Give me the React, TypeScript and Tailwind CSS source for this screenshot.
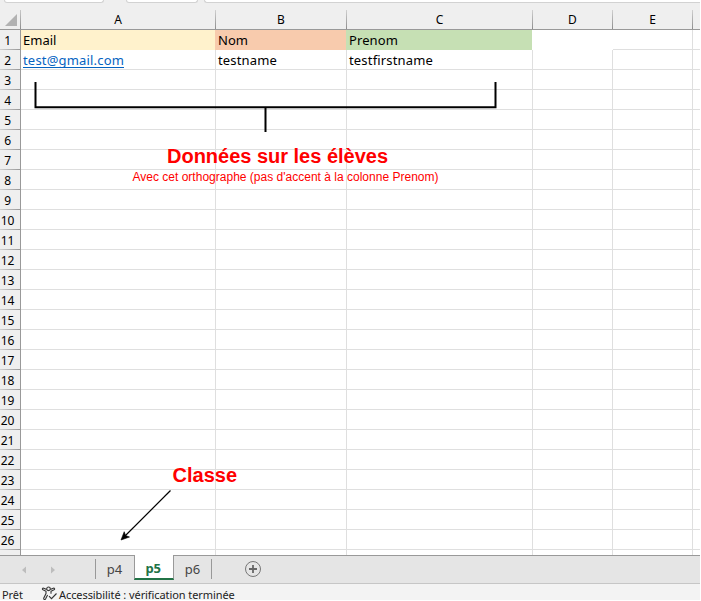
import React from "react";

const rows = Array.from({ length: 26 }, (_, i) => i + 1);

const columns = [
  { name: "A", width: "w-[195px]" },
  { name: "B", width: "w-[131px]" },
  { name: "C", width: "w-[186px]" },
  { name: "D", width: "w-[80px]" },
  { name: "E", width: "w-[80px]" },
];

const headings = [
  { text: "Email", style: "w-[194px] pl-[2px] bg-[#fff2cc]" },
  { text: "Nom", style: "w-[131px] pl-[3px] bg-[#f8cbad]" },
  { text: "Prenom", style: "w-[186px] pl-[3px] bg-[#c6e0b4] tracking-[0.1px]" },
];

function FormulaBar() {
  return (
    <div className="flex h-[10px] shrink-0 items-start bg-[#efefef] pl-1">
      <div className="h-[3px] w-[100px] rounded-b-[4px] border border-t-0 border-[#d2d2d2] bg-white" />
      <div className="ml-[22px] h-[3px] w-[72px] rounded-b-[4px] border border-t-0 border-[#d2d2d2] bg-white" />
      <div className="ml-[6px] h-[3px] flex-1 rounded-bl-[4px] border-b border-l border-[#d2d2d2] bg-white" />
    </div>
  );
}

function ColumnHeaders() {
  return (
    <div className="flex h-5 shrink-0 border-b border-[#999] bg-[#efefef] text-[12px] leading-[19px]">
      <div className="flex w-[21px] shrink-0 items-end justify-end pr-1 pb-[3px]">
        <svg width="12" height="12" viewBox="0 0 12 12"><path d="M12 0V12H0Z" fill="#b2b2b2" /></svg>
      </div>
      <div className="-ml-px h-[19px] w-px bg-linear-to-b from-[#c8c8c8] to-[#8e8e8e]" />
      {columns.map((c) => (
        <div key={c.name} className={`flex shrink-0 ${c.width}`}>
          <span className="flex-1 text-center">{c.name}</span>
          <span className="h-[19px] w-px bg-linear-to-b from-[#d0d0d0] to-[#8e8e8e]" />
        </div>
      ))}
    </div>
  );
}

function RowHeader({ n }: { n: number }) {
  return (
    <div className="flex h-5 w-[21px] shrink-0 flex-col border-r border-[#999] bg-[#efefef]">
      <span className="flex h-[19px] w-[15px] justify-center text-[12px] leading-[21px] tracking-[-0.2px]">{n}</span>
      <span className="h-px bg-linear-to-r from-[#d0d0d0] to-[#999]" />
    </div>
  );
}

function Row({ n }: { n: number }) {
  if (n === 1) {
    return (
      <div className="flex h-5 shrink-0">
        <RowHeader n={1} />
        {headings.map((h) => (
          <div key={h.text} className={`shrink-0 leading-[20px] ${h.style}`}>{h.text}</div>
        ))}
        <div className="w-[81px] shrink-0" />
        <div className="w-[80px] shrink-0 border-r border-b border-[#dfdfdf]" />
        <div className="flex-1 border-b border-[#dfdfdf]" />
      </div>
    );
  }
  return (
    <div className="flex h-5 shrink-0">
      <RowHeader n={n} />
      {columns.map((c, i) => (
        <div key={c.name} className={`shrink-0 border-r border-b border-[#dfdfdf] pl-[2px] leading-[20px] ${c.width}`}>
          {n === 2 && i === 0 && <span className="inline-block h-[18px] border-b border-[#0563c1] tracking-[0.18px] text-[#0563c1]">test@gmail.com</span>}
          {n === 2 && i === 1 && <span className="tracking-[0.15px]">testname</span>}
          {n === 2 && i === 2 && <span className="tracking-[0.17px]">testfirstname</span>}
        </div>
      ))}
      <div className="flex-1 border-b border-[#dfdfdf]" />
    </div>
  );
}

function Annotations() {
  return (
    <svg className="absolute inset-0" width="700" height="600" viewBox="0 0 700 600">
      <path d="M35.5 82V107.3H495.5V82M265.5 107.3V132" fill="none" stroke="#000" strokeWidth="2" />
      <path d="M170.5 490.5L125 536" stroke="#000" strokeWidth="1.2" />
      <path d="M121 540L124.2 531.7L125.6 535.6L129.5 537Z" fill="#000" stroke="#000" strokeWidth="0.6" />
      <g fill="#ff0000" fontFamily="'Liberation Sans', Arial, sans-serif">
        <text x="167" y="163" fontSize="20" fontWeight="700" textLength="221">Données sur les élèves</text>
        <text x="132.5" y="181" fontSize="12" textLength="306">Avec cet orthographe (pas d'accent à la colonne Prenom)</text>
        <text x="172.5" y="482" fontSize="20" fontWeight="700" textLength="64.5">Classe</text>
      </g>
    </svg>
  );
}

function SheetTabs() {
  return (
    <div className="flex h-[29px] shrink-0 border-t border-b border-t-[#999] border-b-[#c6c6c6] bg-[#e5e5e5] text-[13px] leading-[26px] text-[#444]">
      <div className="flex w-[95px] items-center pl-[22px]">
        <svg width="34" height="8" viewBox="0 0 34 8" fill="#bdbdbd"><path d="M4 0.5V7.5L0 4ZM29 0.5V7.5L33 4Z" /></svg>
      </div>
      <div className="my-[3px] h-[20px] w-px bg-[#999]" />
      <div className="w-[38px] pr-px text-center">p4</div>
      <div className="-mt-px h-[25px] w-[40px] border-x border-b-2 border-x-[#999] border-b-[#217346] bg-white pr-[2px] text-center font-bold tracking-[-0.3px] text-[#217346]">p5</div>
      <div className="w-[37px] text-center">p6</div>
      <div className="my-[3px] h-[20px] w-px bg-[#999]" />
      <svg className="mt-[5px] ml-[32px]" width="18" height="18" viewBox="0 0 18 18" fill="none">
        <circle cx="9" cy="8" r="7.5" stroke="#777" />
        <path d="M9 4V12M5 8H13" stroke="#666" strokeWidth="1.8" />
      </svg>
    </div>
  );
}

function StatusBar() {
  return (
    <div className="flex h-[16px] shrink-0 bg-[#f3f3f3] pl-[2px] text-[11px] leading-[22px] text-[#222]">
      <span className="w-[39px] tracking-[-0.1px]">Prêt</span>
      <svg className="mt-[2px] shrink-0" width="18" height="14" viewBox="0 0 18 14" fill="none" stroke="#333" strokeWidth="1.1">
        <circle cx="7.5" cy="2.8" r="1.8" />
        <path d="M5.7 3.4L2.8 2.2C1.4 1.8.9 3.2 2 3.8L5 5.3V7.5L2.7 12.2C2.5 13.5 3.9 14 4.5 13L6.6 9M9.3 3.4L12.2 2.2C13.6 1.8 14.1 3.2 13 3.8L10 5.3V7.7M8 10.2L10.5 12.7L15.5 7.5" />
      </svg>
      <span className="whitespace-nowrap tracking-[-0.08px]">Accessibilité : vérification terminée</span>
    </div>
  );
}

export default function App() {
  return (
    <div className="h-[601px] w-[701px] overflow-hidden bg-white">
      <div className="relative flex h-[600px] w-[700px] flex-col overflow-hidden bg-white font-['Noto_Sans',sans-serif] text-[13px] text-black">
        <FormulaBar />
        <ColumnHeaders />
        <div className="flex h-[525px] shrink-0 flex-col overflow-hidden">
          {rows.map((n) => <Row key={n} n={n} />)}
          <div className="flex h-[5px] shrink-0">
            <div className="w-[21px] shrink-0 border-r border-[#999] bg-[#efefef]" />
            {columns.map((c) => <div key={c.name} className={`shrink-0 border-r border-[#dfdfdf] ${c.width}`} />)}
          </div>
        </div>
        <SheetTabs />
        <StatusBar />
        <Annotations />
      </div>
    </div>
  );
}
